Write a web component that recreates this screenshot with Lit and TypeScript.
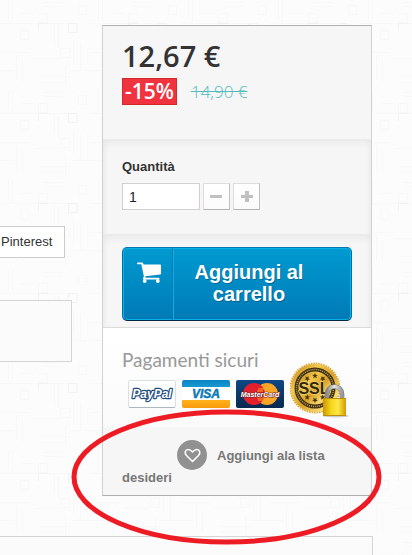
import { LitElement, html, css, svg } from "lit";
import { customElement, state } from "lit/decorators.js";

const starAngles = [-40, 0, 40, 140, 180, 220];

@customElement("payment-logos")
class PaymentLogos extends LitElement {
  static styles = css`
    :host { display: flex; align-items: flex-end; gap: 6px; height: 56px; padding-left: 6px; }
    svg { display: block; flex: none; }
    .card { margin-bottom: 10px; }
    text { font-family: "Liberation Sans", Arial, sans-serif; font-weight: bold; }
    .brand { font-style: italic; }
  `;

  render() {
    return html`
      <svg class="card" width="48" height="28" viewBox="0 0 48 28" role="img" aria-label="PayPal">
        <rect x=".5" y=".5" width="47" height="27" rx="1.5" fill="#fff" stroke="#d9e0e4" />
        <path d="M1 27.5h46" stroke="#a9b8c1" />
        <text class="brand" x="24" y="18" font-size="12" text-anchor="middle" fill="#fff" stroke="#1f4c80" stroke-width="2.4" stroke-linejoin="round" paint-order="stroke">PayPal</text>
      </svg>
      <svg class="card" width="48" height="28" viewBox="0 0 48 28" role="img" aria-label="Visa">
        <defs>
          <linearGradient id="vb" x2="0" y2="1"><stop stop-color="#0b84c2" /><stop offset="1" stop-color="#1799d3" /></linearGradient>
          <linearGradient id="vo" x2="0" y2="1"><stop stop-color="#ffb11f" /><stop offset="1" stop-color="#f99b0a" /></linearGradient>
        </defs>
        <rect width="48" height="28" rx="2" fill="#fff" />
        <path d="M0 7V2q0-2 2-2h44q2 0 2 2v5z" fill="url(#vb)" />
        <path d="M0 20v6q0 2 2 2h44q2 0 2-2v-6z" fill="url(#vo)" />
        <text class="brand" x="24" y="18" font-size="12" text-anchor="middle" fill="#0d79b5" stroke="#0d79b5" stroke-width=".5">VISA</text>
      </svg>
      <svg class="card" width="48" height="28" viewBox="0 0 48 28" role="img" aria-label="MasterCard">
        <defs><linearGradient id="mc" x2="0" y2="1"><stop stop-color="#0d4886" /><stop offset="1" stop-color="#08284f" /></linearGradient></defs>
        <rect width="48" height="28" rx="2" fill="url(#mc)" />
        <circle cx="31" cy="14" r="11" fill="#f9a526" />
        <circle cx="18" cy="14" r="11" fill="#e4202e" />
        <path d="M22 9h6M21 11h6M21 18h7M22 20h6" stroke="#f9a526" />
        <text class="brand" x="24" y="17" font-size="7" text-anchor="middle" fill="#fff" stroke="#6b2028" stroke-width="1" paint-order="stroke">MasterCard</text>
      </svg>
      <svg width="60" height="56" viewBox="0 0 60 56" role="img" aria-label="SSL">
        <defs>
          <linearGradient id="gold" x2="1" y2="1"><stop stop-color="#b8790c" /><stop offset=".3" stop-color="#f4c94c" /><stop offset=".55" stop-color="#d9a024" /><stop offset=".8" stop-color="#f8dc78" /><stop offset="1" stop-color="#bd8414" /></linearGradient>
          <linearGradient id="body"><stop stop-color="#c99700" /><stop offset=".35" stop-color="#f7d51d" /><stop offset=".65" stop-color="#ffe845" /><stop offset="1" stop-color="#d29b00" /></linearGradient>
          <linearGradient id="steel"><stop stop-color="#8a8a8a" /><stop offset=".5" stop-color="#e5e5e5" /><stop offset="1" stop-color="#999" /></linearGradient>
        </defs>
        <circle cx="25" cy="26" r="24.400" fill="none" stroke="#d9a32b" stroke-width="2" stroke-dasharray="1.500 1" />
        <circle cx="25" cy="26" r="24" fill="url(#gold)" />
        <circle cx="25" cy="26" r="18.500" fill="none" stroke="#3a3017" stroke-width="4" />
        <circle cx="25" cy="26" r="18.500" fill="none" stroke="#c79d3f" stroke-width="1.600" stroke-dasharray="1 1" />
        <circle cx="25" cy="26" r="16" fill="url(#gold)" />
        ${starAngles.map((a) => svg`
          <path transform="rotate(${a} 25 26)" d="m25 11 .8 1.800 2 .2-1.500 1.300.4 2-1.700-1-1.700 1 .4-2-1.500-1.300 2-.2z" fill="#4a380c" />`)}
        <text x="24" y="32" font-size="16" text-anchor="middle" fill="#30270f" stroke="#f3cd60" stroke-width="1.600" paint-order="stroke">SSL</text>
        <ellipse cx="46" cy="54" rx="13" ry="1.400" fill="#000" opacity=".18" />
        <path d="M37 38v-6a7.500 7.500 0 0 1 15 0v6" fill="none" stroke="#777" stroke-width="4.600" />
        <path d="M37 38v-6a7.500 7.500 0 0 1 15 0v6" fill="none" stroke="url(#steel)" stroke-width="3.400" />
        <rect x="33" y="36" width="23" height="18" rx="1" fill="url(#body)" />
        <path d="M33 36.500h23M33 53.500h23" stroke="#bd8e00" />
      </svg>
    `;
  }
}

@customElement("app-root")
class AppRoot extends LitElement {
  @state() quantity = 1;

  static styles = css`
    :host { display: block; font: 13px/22px "Liberation Sans", Arial, sans-serif; color: #333; }
    * { box-sizing: border-box; }
    .page { position: relative; display: flex; flex-direction: column; overflow: hidden; min-height: 100vh; background: #fcfcfc; padding-top: 25px; }
    .weave { position: absolute; inset: 0; width: 100%; height: 100%; }
    .columns { position: relative; z-index: 1; display: grid; grid-template-columns: minmax(0, 1fr) 270px; gap: 30px; padding-right: 40px; }
    .share { display: flex; flex-direction: column; align-items: flex-start; padding-top: 201px; gap: 42px; }
    .pin { height: 32px; padding: 0 12px 0 1px; background: #fff; border: 1px solid #ccc; border-left: 0; font: inherit; color: #333; }
    .note { width: 100%; height: 62px; background: #fbfbfb; border: 1px solid #d6d4d4; border-left: 0; }
    .card { position: relative; background: #f6f6f6; border: 1px solid #d2d0d0; border-top-color: #b0b0b0; border-bottom-color: #b0b0b0; }
    .section { padding: 0 19px; }
    .prices { height: 113px; padding-top: 14px; }
    .price { margin: 0; font: 600 29px/32px "Open Sans", sans-serif; color: #333; }
    .deal { display: flex; align-items: center; gap: 14px; margin-top: 6px; }
    .off { padding: 0 2px; background: #f13340; border: 1px solid #d02a2c; color: #fff; font: 600 21px/25px "Open Sans", sans-serif; }
    .old { color: #52bcbd; font: 300 17px/24px "Open Sans", sans-serif; }
    .inset { box-shadow: inset 0 5px 6px rgba(0, 0, 0, 0.04), inset 5px 0 6px -3px rgba(0, 0, 0, 0.03), inset -5px 0 6px -3px rgba(0, 0, 0, 0.03); border-top: 1px solid #ebebeb; }
    .amount { height: 95px; padding-top: 16px; }
    .amount label { display: block; font-weight: bold; }
    .stepper { display: flex; gap: 3px; margin-top: 5px; }
    .stepper input { width: 78px; height: 27px; padding: 0 6px; border: 1px solid #d2d0d0; background: #fff; font: 14px/25px "Liberation Sans", Arial, sans-serif; color: #222; }
    .step { display: grid; place-items: center; width: 27px; height: 27px; padding: 0; border: 1px solid; border-color: #dedcdc #c1bfbf #b5b4b4 #dedcdc; background: linear-gradient(#fff, #fbfbfb); }
    .buy { height: 94px; padding-top: 12px; border-bottom: 1px solid #dcdcdc; }
    .cart { display: flex; width: 100%; min-height: 74px; padding: 0; overflow: hidden; border: 1px solid; border-color: #0079b6 #006fa8 #012740; border-radius: 5px; background: linear-gradient(#009ad0, #007ab7); box-shadow: inset 0 0 0 1px #06b2e6; color: #fff; font: bold 20px/22px "Liberation Sans", Arial, sans-serif; text-shadow: 1px 1px rgba(0, 0, 0, 0.25); }
    .cart svg { flex: none; margin: 14px 12px 0 14px; }
    .cart span { flex: 1; align-self: stretch; padding: 13px 36px 0 9px; border-left: 1px solid #06b2e6; box-shadow: -1px 0 #0079b6; text-align: center; }
    .secure { height: 99px; padding-top: 20px; background: linear-gradient(#fff, #fafafa); }
    .secure h2 { margin: 0; height: 14px; font: 19px/24px "Lato", sans-serif; color: #999; }
    .wish { padding: 13px 19px 6px; }
    .wish a { display: block; color: #777; font-weight: bold; text-decoration: none; }
    .wish svg { margin: 0 10px -3px 55px; vertical-align: -7px; }
    .tabs { position: relative; flex: 1; min-height: 19px; margin: 40px 39px 0 0; background: #fbfbfb; border: 1px solid #d6d4d4; border-width: 1px 1px 0 0; }
    .mark { position: absolute; left: -32px; bottom: -50px; width: 311px; height: 136px; pointer-events: none; }
  `;

  private change(by: number) {
    this.quantity = Math.max(1, this.quantity + by);
  }

  render() {
    return html`
      <main class="page">
        <svg class="weave" aria-hidden="true">
          <defs>
            <pattern id="weave" width="90" height="90" patternUnits="userSpaceOnUse">
              <g fill="none" stroke="#f8f8f8">
                <path d="M0 23.500h38M47 23.500h21M8.500 0v20M12.500 0v22M20 13.500h14M43 2.500h20M43 6.500h20M54.500 24v20M58.500 26v22M0 52.500h30M34 58.500h25M70 70.500h20M73.500 40v24M80.500 44v26M16.500 55v25M22.500 60v22M40 76.500h30M40 82.500h24M0 70.500h14M65.500 66v20" />
                <path d="M38.500 13.500h9v9h-9zM20.500 30.500h8v9h-8zM60.500 48.500h9v9h-9zM78.500 5.500h8v9h-8z" />
              </g>
              <path d="M38 23.500h10M68 23.500h9v9h-9M68.500 23v10M38.500 23v8" fill="none" stroke="#f2f2f2" />
            </pattern>
          </defs>
          <rect width="100%" height="100%" fill="url(#weave)" />
        </svg>

        <div class="columns">
          <div class="share">
            <button class="pin" type="button">Pinterest</button>
            <div class="note"></div>
          </div>

          <section class="card">
            <div class="section prices">
              <p class="price">12,67 €</p>
              <div class="deal"><span class="off">-15%</span><s class="old">14,90 €</s></div>
            </div>

            <div class="section inset amount">
              <label for="qty">Quantità</label>
              <div class="stepper">
                <input id="qty" type="text" .value=${String(this.quantity)} />
                <button class="step" type="button" aria-label="Meno" @click=${() => this.change(-1)}>
                  <svg width="13" height="13"><path d="M0 5h12v3H0z" fill="#c0c0c0" /></svg>
                </button>
                <button class="step" type="button" aria-label="Più" @click=${() => this.change(1)}>
                  <svg width="13" height="13"><path d="M1 5h4V1h4v4h4v3H9v4H5V8H1z" fill="#c0c0c0" /></svg>
                </button>
              </div>
            </div>

            <div class="section inset buy">
              <button class="cart" type="button">
                <svg width="24" height="22" viewBox="0 0 24 22" aria-hidden="true">
                  <path d="M.8.500h4.400q.8 0 1 .9l.3 1.100H23q1 0 1 1v8q0 .9-.9 1L8.300 14.200l.3 1.500h13.200q.8 0 .8.900t-.8.900H7q-1 0-1-.9 0-.4.900-2L4.300 2.300H.8Q0 2.300 0 1.400T.8.500z" fill="#fff" />
                  <circle cx="7.700" cy="19" r="1.900" fill="#fff" /><circle cx="20.800" cy="19" r="1.900" fill="#fff" />
                </svg>
                <span>Aggiungi al carrello</span>
              </button>
            </div>

            <div class="section secure">
              <h2>Pagamenti sicuri</h2>
              <payment-logos></payment-logos>
            </div>

            <div class="wish">
              <a href="#"><svg width="30" height="30" viewBox="0 0 30 30" aria-hidden="true">
                <circle cx="15" cy="15" r="15" fill="#919191" />
                <path d="M15.500 21.500 9.500 15.500C7 12.800 8.300 9.500 11.300 9.500c2 0 3 1.200 4.200 2.500 1.200-1.300 2.200-2.500 4.200-2.500 3 0 4.300 3.300 1.800 6z" fill="none" stroke="#fff" stroke-width="1.600" stroke-linejoin="round" />
              </svg>Aggiungi ala lista desideri</a>
            </div>

            <svg class="mark" viewBox="0 0 311 136" aria-hidden="true">
              <ellipse cx="155.500" cy="68" rx="152.500" ry="65" fill="none" stroke="#ed1c24" stroke-width="5" />
            </svg>
          </section>
        </div>
        <div class="tabs"></div>
      </main>
    `;
  }
}
